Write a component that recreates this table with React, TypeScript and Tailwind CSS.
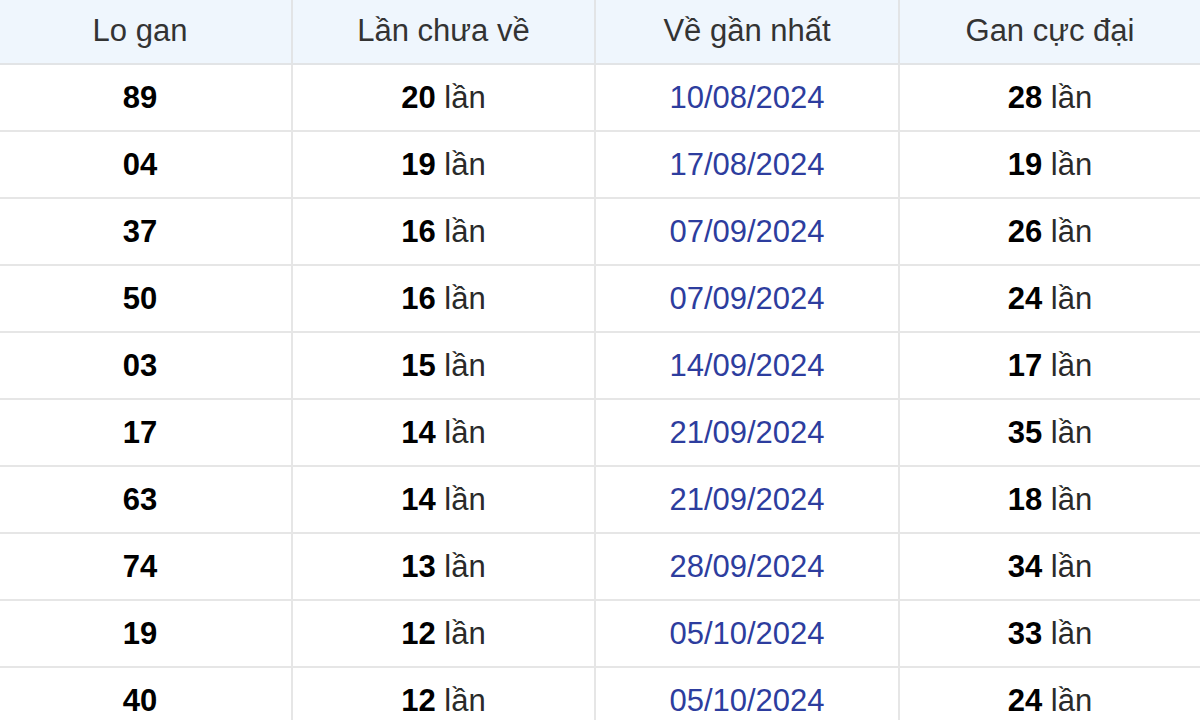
const rows = [
  { lo: "89", chua: 20, date: "10/08/2024", max: 28 },
  { lo: "04", chua: 19, date: "17/08/2024", max: 19 },
  { lo: "37", chua: 16, date: "07/09/2024", max: 26 },
  { lo: "50", chua: 16, date: "07/09/2024", max: 24 },
  { lo: "03", chua: 15, date: "14/09/2024", max: 17 },
  { lo: "17", chua: 14, date: "21/09/2024", max: 35 },
  { lo: "63", chua: 14, date: "21/09/2024", max: 18 },
  { lo: "74", chua: 13, date: "28/09/2024", max: 34 },
  { lo: "19", chua: 12, date: "05/10/2024", max: 33 },
  { lo: "40", chua: 12, date: "05/10/2024", max: 24 },
];

const headers = ["Lo gan", "Lần chưa về", "Về gần nhất", "Gan cực đại"];

function Times({ n }: { n: number }) {
  return (
    <span>
      <b className="font-bold text-black">{n}</b>{" "}
      <span className="text-[#2a2a2a]">lần</span>
    </span>
  );
}

export default function App() {
  return (
    <div
      className="w-[1200px] h-[720px] overflow-hidden bg-white text-[31px]"
      style={{ fontFamily: '"Liberation Sans", Arial, sans-serif' }}
    >
      {/* first column is partly scrolled off to the left, so its content sits left of centre */}
      <div className="grid grid-cols-[291px_303px_304px_302px]">
        {headers.map((h, i) => (
          <div
            key={h}
            className={
              "h-[65px] flex items-center justify-center bg-[#eff6fd] text-[#333] border-b-2 border-[#e2e4e6] " +
              (i > 0 ? "border-l-2" : "pr-[11px]")
            }
          >
            {h}
          </div>
        ))}
        {rows.map((r, idx) => (
          <div key={idx} className="contents">
            <div className="h-[67px] pt-[2px] flex items-center justify-center border-b-2 border-[#e6e6e6] font-bold text-black pr-[11px]">
              {r.lo}
            </div>
            <div className="h-[67px] pt-[2px] flex items-center justify-center border-b-2 border-l-2 border-[#e6e6e6]">
              <Times n={r.chua} />
            </div>
            <div className="h-[67px] pt-[2px] flex items-center justify-center border-b-2 border-l-2 border-[#e6e6e6] text-[#2d3d9e]">
              {r.date}
            </div>
            <div className="h-[67px] pt-[2px] flex items-center justify-center border-b-2 border-l-2 border-[#e6e6e6]">
              <Times n={r.max} />
            </div>
          </div>
        ))}
      </div>
    </div>
  );
}
